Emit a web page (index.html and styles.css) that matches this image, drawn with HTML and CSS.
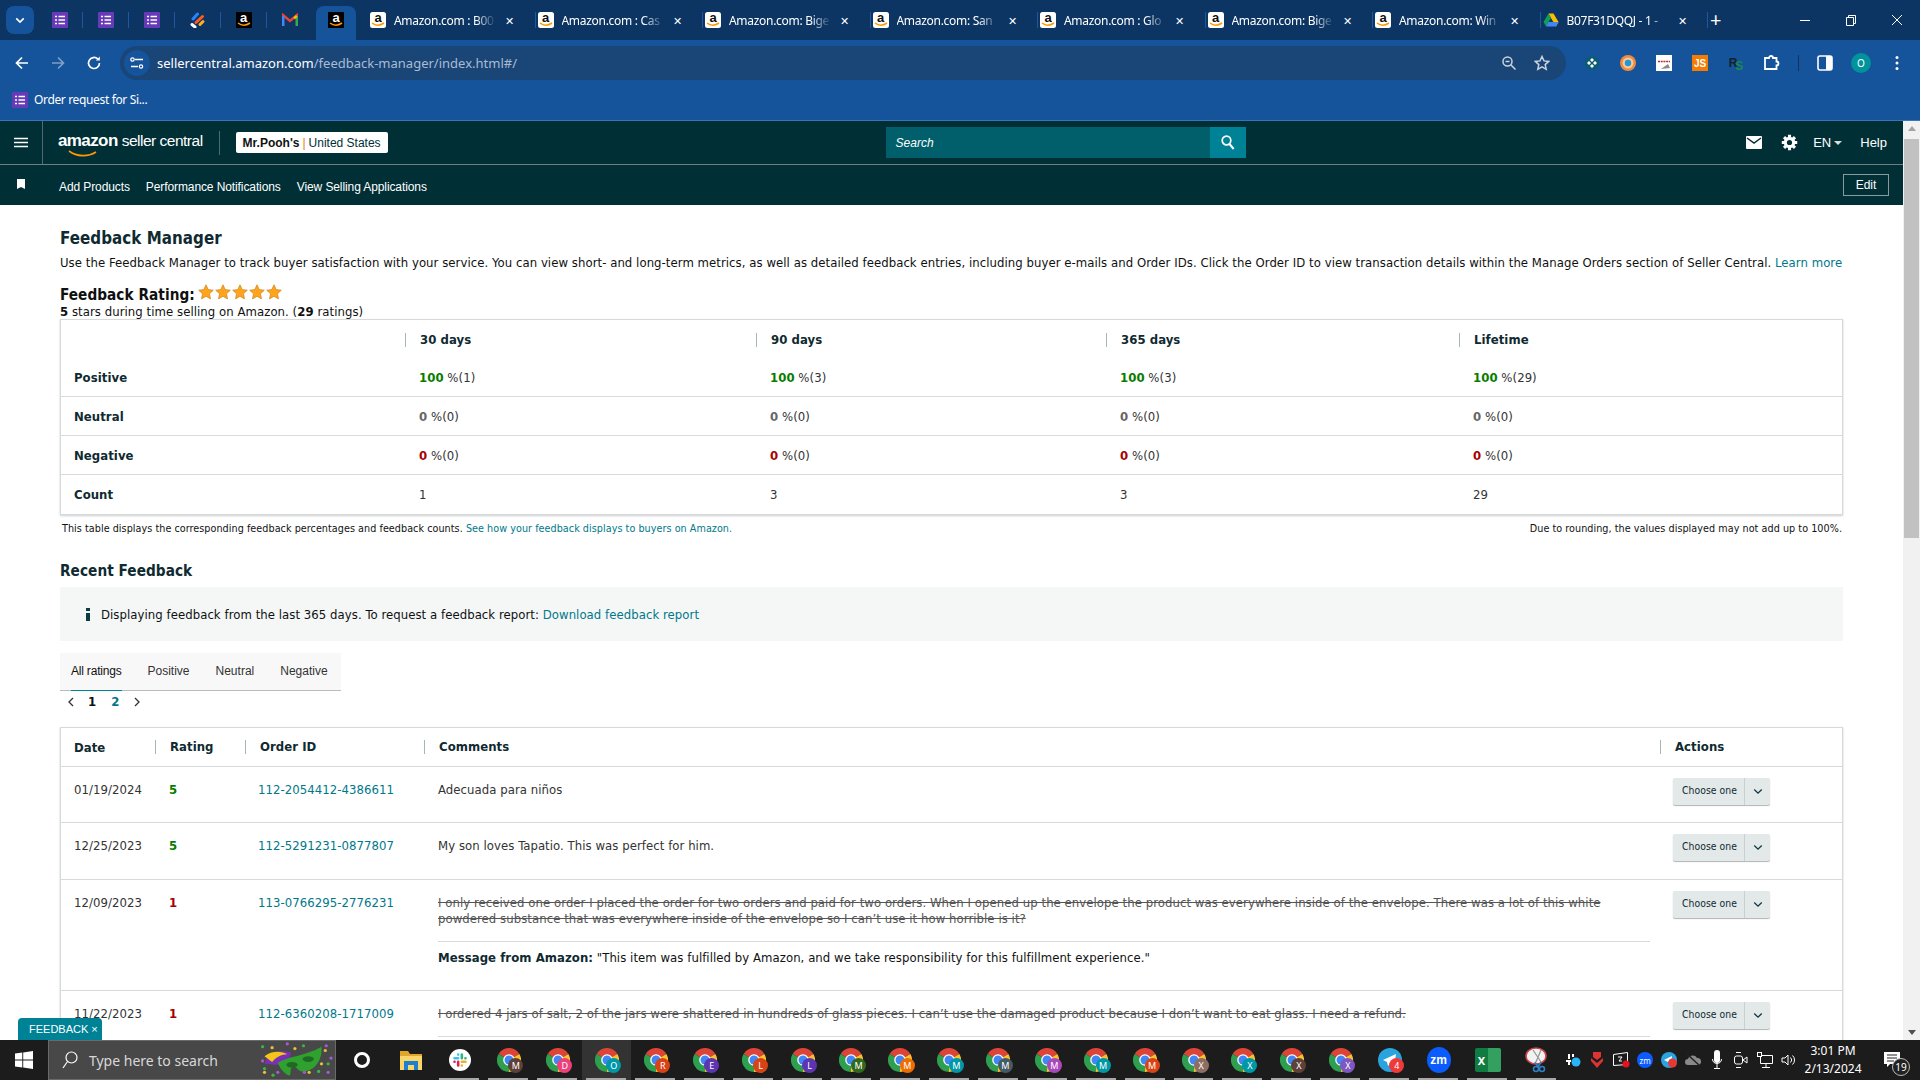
FILE: index.html
```html
<!DOCTYPE html>
<html lang="en">

<head>
    <meta charset="UTF-8">
    <meta name="viewport" content="width=device-width, initial-scale=1.0">
    <title>Feedback Manager</title>
    <link rel="stylesheet" href="styles.css">
</head>

<body>
    <svg class="defs" width="0" height="0">
        <symbol id="forms" viewBox="0 0 16 16">
            <rect width="16" height="16" rx="1" fill="#673ab7" />
            <path d="M3 4.500h2M6.500 4.500H13M3 8h2M6.500 8H13M3 11.500h2M6.500 11.500H13" stroke="#fff" stroke-width="1.600" />
        </symbol>
        <symbol id="smile" viewBox="0 0 14 5">
            <path d="M1 1c3.500 2.800 8 2.800 12 0" fill="none" stroke="#f90" stroke-width="1.600" />
        </symbol>
        <symbol id="chrome" viewBox="0 0 24 24">
            <path d="M12 12L1.600 6A12 12 0 0 1 22.400 6Z" fill="#db4437" />
            <path d="M12 12L22.400 6A12 12 0 0 1 12 24Z" fill="#fbc02d" />
            <path d="M12 12L12 24A12 12 0 0 1 1.600 6Z" fill="#2e9e4f" />
            <circle cx="12" cy="12" r="5.800" fill="#fff" />
            <circle cx="12" cy="12" r="4.500" fill="#4285f4" />
        </symbol>
        <symbol id="star" viewBox="0 0 16 16">
            <path d="M8 .8l2.200 4.800 5.100.6-3.800 3.500 1 5.200L8 12.300l-4.500 2.600 1-5.200L.7 6.200l5.100-.6z" fill="#ffa41c" stroke="#c7851a" stroke-width=".7" />
        </symbol>
        <symbol id="caret" viewBox="0 0 12 8">
            <path d="M1.500 1.500L6 6l4.500-4.500" fill="none" stroke="#0f3b45" stroke-width="1.600" />
        </symbol>
    </svg>

    <div class="tabstrip">
        <button class="tab-search"><svg width="10" height="7" viewBox="0 0 12 8"><path d="M1.500 1.500L6 6l4.500-4.500" fill="none" stroke="#fff" stroke-width="2" /></svg></button>
        <div class="pinned"><svg width="16" height="16"><use href="#forms" /></svg></div>
        <div class="pinned"><svg width="16" height="16"><use href="#forms" /></svg></div>
        <div class="pinned"><svg width="16" height="16"><use href="#forms" /></svg></div>
        <div class="pinned">
            <svg width="16" height="16" viewBox="0 0 16 16"><path d="M7.500 2L3 7" stroke="#2684ff" stroke-width="3" stroke-linecap="round" /><path d="M12.500 4.500L6 10.500" stroke="#ff5a1f" stroke-width="3" stroke-linecap="round" /><path d="M13 9.500l-3 3" stroke="#ffb020" stroke-width="3" stroke-linecap="round" /><path d="M2 12.500l3 2.500" stroke="#fff" stroke-width="3" stroke-linecap="round" /></svg>
        </div>
        <div class="pinned"><span class="fav dark">a<svg width="14" height="5"><use href="#smile" /></svg></span></div>
        <div class="pinned no-sep">
            <svg width="16" height="14" viewBox="0 0 16 14"><path d="M1 13V2l7 6 7-6v11" fill="none" stroke="#ea4335" stroke-width="2.400" /><path d="M1.200 13V3" stroke="#4285f4" stroke-width="2.400" /><path d="M14.800 13V3" stroke="#34a853" stroke-width="2.400" /><path d="M14.800 3L12 5.400" stroke="#fbbc04" stroke-width="2.400" /></svg>
        </div>
        <div class="tab-active"><span class="fav dark">a<svg width="14" height="5"><use href="#smile" /></svg></span></div>
        <div class="tab"><span class="fav">a<svg width="14" height="5"><use href="#smile" /></svg></span><span class="tab-title">Amazon.com : B00</span><span class="tab-close">✕</span></div>
        <div class="tab"><span class="fav">a<svg width="14" height="5"><use href="#smile" /></svg></span><span class="tab-title">Amazon.com : Cas</span><span class="tab-close">✕</span></div>
        <div class="tab"><span class="fav">a<svg width="14" height="5"><use href="#smile" /></svg></span><span class="tab-title">Amazon.com: Bige</span><span class="tab-close">✕</span></div>
        <div class="tab"><span class="fav">a<svg width="14" height="5"><use href="#smile" /></svg></span><span class="tab-title">Amazon.com: San</span><span class="tab-close">✕</span></div>
        <div class="tab"><span class="fav">a<svg width="14" height="5"><use href="#smile" /></svg></span><span class="tab-title">Amazon.com : Glo</span><span class="tab-close">✕</span></div>
        <div class="tab"><span class="fav">a<svg width="14" height="5"><use href="#smile" /></svg></span><span class="tab-title">Amazon.com: Bige</span><span class="tab-close">✕</span></div>
        <div class="tab"><span class="fav">a<svg width="14" height="5"><use href="#smile" /></svg></span><span class="tab-title">Amazon.com: Win</span><span class="tab-close">✕</span></div>
        <div class="tab">
            <svg width="16" height="16" viewBox="0 0 16 16"><path d="M5.500 1.500h5L15.500 10l-2.500 4.500-5-8.500z" fill="#fbbc04" /><path d="M5.500 1.500L.5 10 3 14.500 8 6z" fill="#0f9d58" /><path d="M5.400 10h10.100L13 14.500H3z" fill="#4285f4" /></svg>
            <span class="tab-title">B07F31DQQJ - 1 -</span><span class="tab-close">✕</span>
        </div>
        <span class="new-tab">+</span>
        <div class="win-controls">
            <span class="win-btn"><svg width="10" height="10"><path d="M0 5.500h10" stroke="#fff" /></svg></span>
            <span class="win-btn"><svg width="10" height="11"><path d="M.5 2.500h7v8h-7zM2.500 2.500V.5h7v8h-2" fill="none" stroke="#fff" /></svg></span>
            <span class="win-btn"><svg width="10" height="10"><path d="M0 0l10 10M10 0L0 10" stroke="#fff" /></svg></span>
        </div>
    </div>

    <div class="toolbar">
        <span class="tool-btn"><svg width="16" height="16" viewBox="0 0 16 16"><path d="M14 8H3M8 2.500L2.500 8 8 13.500" fill="none" stroke="#fff" stroke-width="1.700" /></svg></span>
        <span class="tool-btn"><svg width="16" height="16" viewBox="0 0 16 16"><path d="M2 8h11M8 2.500L13.500 8 8 13.500" fill="none" stroke="#7f9fc6" stroke-width="1.700" /></svg></span>
        <span class="tool-btn"><svg width="16" height="16" viewBox="0 0 16 16"><path d="M13.500 8A5.500 5.500 0 1 1 11.800 4" fill="none" stroke="#fff" stroke-width="1.700" /><path d="M13.800 1.500v4h-4z" fill="#fff" /></svg></span>
        <div class="omnibox">
            <span class="site-info"><svg width="14" height="12" viewBox="0 0 14 12"><path d="M5 2.500h8M1 9.500h7" stroke="#fff" stroke-width="1.300" /><circle cx="2.500" cy="2.500" r="1.700" fill="none" stroke="#fff" stroke-width="1.200" /><circle cx="11" cy="9.500" r="1.700" fill="none" stroke="#fff" stroke-width="1.200" /></svg></span>
            <span class="url"><b>sellercentral.amazon.com</b>/feedback-manager/index.html#/</span>
            <svg class="omni-zoom" width="16" height="16" viewBox="0 0 16 16"><circle cx="6.500" cy="6.500" r="4.500" fill="none" stroke="#c9d3df" stroke-width="1.500" /><path d="M10 10l4.500 4.500M4.500 6.500h4" stroke="#c9d3df" stroke-width="1.500" /></svg>
            <svg class="omni-star" width="16" height="16" viewBox="0 0 16 16"><path d="M8 1.500l2 4.400 4.700.5-3.500 3.200 1 4.700L8 11.900l-4.200 2.400 1-4.700L1.300 6.400 6 5.900z" fill="none" stroke="#c9d3df" stroke-width="1.500" /></svg>
        </div>
        <div class="ext-icons">
            <span class="ext"><svg width="16" height="16" viewBox="0 0 16 16"><circle cx="8" cy="8" r="7" fill="#0b5c73" /><path d="M8 3l2 2-2 2-2-2zM8 9l2 2-2 2-2-2zM3 8l2-2 2 2-2 2zM13 8l-2-2-2 2 2 2z" fill="#fff" /></svg></span>
            <span class="ext"><svg width="18" height="18" viewBox="0 0 18 18"><circle cx="9" cy="9" r="8" fill="#f08a3c" /><circle cx="9" cy="9" r="5.500" fill="#f6c79a" /><circle cx="9" cy="9" r="3.200" fill="#1b9ad6" /></svg></span>
            <span class="ext"><svg width="16" height="16" viewBox="0 0 16 16"><rect width="16" height="16" fill="#fff" /><path d="M2 6.500h12" stroke="#a33" stroke-width="1.500" stroke-dasharray="2 .7" /><path d="M5 14l7-5 2 4z" fill="#8a8a8a" /></svg></span>
            <span class="ext ext-js">JS</span>
            <span class="ext ext-rs">R<i>S</i></span>
            <span class="ext"><svg width="18" height="18" viewBox="0 0 18 18"><path d="M2 4h4a2 2 0 0 1 4 0h3.500v3.500a2 2 0 0 1 0 4V15H2z" fill="none" stroke="#fff" stroke-width="1.800" /></svg></span>
            <span class="ext-sep"></span>
            <span class="ext"><svg width="16" height="16" viewBox="0 0 16 16"><rect x="1" y="1" width="14" height="14" rx="2" fill="none" stroke="#fff" stroke-width="1.600" /><rect x="9" y="1" width="6" height="14" fill="#fff" /></svg></span>
            <span class="ext"><span class="avatar">O</span></span>
            <span class="ext"><svg width="4" height="16" viewBox="0 0 4 16"><circle cx="2" cy="2.500" r="1.500" fill="#fff" /><circle cx="2" cy="8" r="1.500" fill="#fff" /><circle cx="2" cy="13.500" r="1.500" fill="#fff" /></svg></span>
        </div>
    </div>

    <div class="bookmarks">
        <svg width="16" height="16"><use href="#forms" /></svg>
        <span>Order request for Si...</span>
    </div>

    <div class="viewport">
        <div class="page">
            <header class="topnav">
                <span class="burger"><svg width="14" height="11" viewBox="0 0 14 11"><path d="M0 1.500h14M0 5.500h14M0 9.500h14" stroke="#fff" stroke-width="1.700" /></svg></span>
                <div class="logo">
                    <span class="logo-amazon">amazon</span><span class="logo-seller">seller central</span>
                    <svg class="logo-smile" width="30" height="8" viewBox="0 0 30 8"><path d="M1 1c8 6 19 6 27 1" fill="none" stroke="#f90" stroke-width="1.600" /></svg>
                </div>
                <span class="logo-sep"></span>
                <div class="store"><b>Mr.Pooh's</b> <i>|</i> United States</div>
                <div class="search">
                    <span class="search-input">Search</span>
                    <span class="search-btn"><svg width="14" height="15" viewBox="0 0 14 15"><circle cx="5.500" cy="5.500" r="4.300" fill="none" stroke="#fff" stroke-width="1.700" /><path d="M8.500 9l4.200 5" stroke="#fff" stroke-width="2" /></svg></span>
                </div>
                <div class="topnav-right">
                    <svg width="16" height="13" viewBox="0 0 16 13"><rect width="16" height="13" rx="1" fill="#fff" /><path d="M1 2l7 5 7-5" fill="none" stroke="#002f36" stroke-width="1.500" /></svg>
                    <svg class="gear" width="19" height="19" viewBox="0 0 16 16"><path d="M8 1.500v13M1.500 8h13M3.400 3.400l9.200 9.200M12.600 3.400l-9.200 9.200" stroke="#fff" stroke-width="2.600" /><circle cx="8" cy="8" r="4.800" fill="#fff" /><circle cx="8" cy="8" r="2.200" fill="#002f36" /></svg>
                    <span class="lang">EN</span><span class="lang-caret"></span>
                    <span class="help">Help</span>
                </div>
            </header>
            <nav class="subnav">
                <svg class="bookmark" width="8" height="10" viewBox="0 0 8 10"><path d="M0 0h8v10L4 8l-4 2z" fill="#fff" /></svg>
                <a>Add Products</a>
                <a>Performance Notifications</a>
                <a>View Selling Applications</a>
                <span class="edit-btn">Edit</span>
            </nav>

            <main class="content">
                <h1>Feedback Manager</h1>
                <p class="intro">Use the Feedback Manager to track buyer satisfaction with your service. You can view short- and long-term metrics, as well as detailed feedback entries, including buyer e-mails and Order IDs. Click the Order ID to view transaction details within the Manage Orders section of Seller Central. <a class="link">Learn more</a></p>
                <div class="rating-title">
                    <h2>Feedback Rating:</h2>
                    <span class="stars">
                        <svg width="16" height="16"><use href="#star" /></svg>
                        <svg width="16" height="16"><use href="#star" /></svg>
                        <svg width="16" height="16"><use href="#star" /></svg>
                        <svg width="16" height="16"><use href="#star" /></svg>
                        <svg width="16" height="16"><use href="#star" /></svg>
                    </span>
                </div>
                <p class="rating-sub"><b>5</b> stars during time selling on Amazon. (<b>29</b> ratings)</p>

                <div class="panel">
                    <table class="summary">
                        <thead>
                            <tr>
                                <th></th>
                                <th><span class="th-label">30 days</span></th>
                                <th><span class="th-label">90 days</span></th>
                                <th><span class="th-label">365 days</span></th>
                                <th><span class="th-label">Lifetime</span></th>
                            </tr>
                        </thead>
                        <tbody>
                            <tr>
                                <th>Positive</th>
                                <td><b class="good">100</b> %(1)</td>
                                <td><b class="good">100</b> %(3)</td>
                                <td><b class="good">100</b> %(3)</td>
                                <td><b class="good">100</b> %(29)</td>
                            </tr>
                            <tr>
                                <th>Neutral</th>
                                <td><b class="neutral">0</b> %(0)</td>
                                <td><b class="neutral">0</b> %(0)</td>
                                <td><b class="neutral">0</b> %(0)</td>
                                <td><b class="neutral">0</b> %(0)</td>
                            </tr>
                            <tr>
                                <th>Negative</th>
                                <td><b class="bad">0</b> %(0)</td>
                                <td><b class="bad">0</b> %(0)</td>
                                <td><b class="bad">0</b> %(0)</td>
                                <td><b class="bad">0</b> %(0)</td>
                            </tr>
                            <tr>
                                <th>Count</th>
                                <td>1</td>
                                <td>3</td>
                                <td>3</td>
                                <td>29</td>
                            </tr>
                        </tbody>
                    </table>
                </div>
                <div class="footnote">
                    <span>This table displays the corresponding feedback percentages and feedback counts. <a class="link">See how your feedback displays to buyers on Amazon.</a></span>
                    <span>Due to rounding, the values displayed may not add up to 100%.</span>
                </div>

                <h2 class="recent-title">Recent Feedback</h2>
                <div class="banner">
                    <svg width="4" height="13" viewBox="0 0 4 13"><path d="M0 0h4v3H0zM0 5h4v8H0z" fill="#0f3b45" /></svg>
                    <span>Displaying feedback from the last 365 days. To request a feedback report: <a class="link">Download feedback report</a></span>
                </div>
                <div class="tabs">
                    <span class="tab-link active">All ratings</span>
                    <span class="tab-link">Positive</span>
                    <span class="tab-link">Neutral</span>
                    <span class="tab-link">Negative</span>
                </div>
                <div class="pager">
                    <svg width="6" height="10" viewBox="0 0 6 10"><path d="M5 1L1 5l4 4" fill="none" stroke="#333" stroke-width="1.300" /></svg>
                    <b>1</b>
                    <b class="link">2</b>
                    <svg width="6" height="10" viewBox="0 0 6 10"><path d="M1 1l4 4-4 4" fill="none" stroke="#333" stroke-width="1.300" /></svg>
                </div>

                <div class="panel">
                    <table class="recent">
                        <thead>
                            <tr>
                                <th class="col-date">Date</th>
                                <th class="col-rating"><span class="th-label">Rating</span></th>
                                <th class="col-order"><span class="th-label">Order ID</span></th>
                                <th class="col-comments"><span class="th-label">Comments</span></th>
                                <th class="col-actions"><span class="th-label">Actions</span></th>
                            </tr>
                        </thead>
                        <tbody>
                            <tr class="row-a">
                                <td>01/19/2024</td>
                                <td class="good-cell"><b class="good">5</b></td>
                                <td><a class="link">112-2054412-4386611</a></td>
                                <td class="comment-cell">Adecuada para niños</td>
                                <td class="action-cell"><div class="choose"><span>Choose one</span><i><svg width="10" height="7"><use href="#caret" /></svg></i></div></td>
                            </tr>
                            <tr class="row-b">
                                <td>12/25/2023</td>
                                <td class="good-cell"><b class="good">5</b></td>
                                <td><a class="link">112-5291231-0877807</a></td>
                                <td class="comment-cell">My son loves Tapatio. This was perfect for him.</td>
                                <td class="action-cell"><div class="choose"><span>Choose one</span><i><svg width="10" height="7"><use href="#caret" /></svg></i></div></td>
                            </tr>
                            <tr class="row-c">
                                <td>12/09/2023</td>
                                <td class="good-cell"><b class="bad">1</b></td>
                                <td><a class="link">113-0766295-2776231</a></td>
                                <td class="comment-cell">
                                    <p class="removed">I only received one order I placed the order for two orders and paid for two orders. When I opened up the envelope the product was everywhere inside of the envelope. There was a lot of this white<br>powdered substance that was everywhere inside of the envelope so I can’t use it how horrible is it?</p>
                                    <p class="amz-msg"><b>Message from Amazon:</b> "This item was fulfilled by Amazon, and we take responsibility for this fulfillment experience."</p>
                                </td>
                                <td class="action-cell"><div class="choose"><span>Choose one</span><i><svg width="10" height="7"><use href="#caret" /></svg></i></div></td>
                            </tr>
                            <tr class="row-c">
                                <td>11/22/2023</td>
                                <td class="good-cell"><b class="bad">1</b></td>
                                <td><a class="link">112-6360208-1717009</a></td>
                                <td class="comment-cell"><p class="removed">I ordered 4 jars of salt, 2 of the jars were shattered in hundreds of glass pieces. I can’t use the damaged product because I don’t want to eat glass. I need a refund.</p></td>
                                <td class="action-cell"><div class="choose"><span>Choose one</span><i><svg width="10" height="7"><use href="#caret" /></svg></i></div></td>
                            </tr>
                        </tbody>
                    </table>
                </div>
            </main>
            <div class="feedback-tab">FEEDBACK <span>×</span></div>
        </div>

        <div class="scrollbar">
            <span class="arrow-up"></span>
            <div class="thumb"></div>
            <span class="arrow-down"></span>
        </div>
    </div>

    <footer class="taskbar">
        <span class="start"><svg width="18" height="18" viewBox="0 0 18 18"><path d="M0 2.600l7.300-1v7H0zM8.200 1.400L18 0v8.600H8.200zM0 9.400h7.300v7l-7.300-1zM8.200 9.400H18V18l-9.800-1.400z" fill="#fff" /></svg></span>
        <div class="task-search">
            <svg width="16" height="18" viewBox="0 0 16 18"><circle cx="9.500" cy="6.500" r="5.500" fill="none" stroke="#fff" stroke-width="1.200" /><path d="M5.500 10.500L1 17" stroke="#fff" stroke-width="1.200" /></svg>
            <span>Type here to search</span>
            <svg class="mask" width="84" height="38" viewBox="0 0 84 40">
                <path d="M12 24c2-10 14-16 28-12l-4 14z" fill="#7b2fb5" />
                <path d="M12 16c7-6 18-6 24-2-8 0-12 4-16 8z" fill="#f5c518" />
                <path d="M26 23C36 16 55 16 72 6c1 14-7 26-20 26-5 0-5-5-10-5-4 0-1 11-5 9-5-2-9-8-11-13z" fill="#2fa12f" />
                <ellipse cx="41" cy="25" rx="6" ry="3" fill="#1f6a23" />
                <ellipse cx="58" cy="19" rx="6" ry="3" fill="#1f6a23" />
                <g fill="#3bb54a"><circle cx="10" cy="6" r="1.700" /><circle cx="53" cy="5" r="1.700" /><circle cx="79" cy="24" r="1.700" /><circle cx="12" cy="29" r="1.700" /><circle cx="21" cy="36" r="1.700" /><circle cx="69" cy="32" r="1.700" /></g>
                <g fill="#e6c13c"><circle cx="20" cy="7" r="1.700" /><circle cx="44" cy="8" r="1.700" /><circle cx="76" cy="10" r="1.700" /><circle cx="72" cy="24" r="1.700" /><circle cx="12" cy="33" r="1.700" /><circle cx="59" cy="33" r="1.700" /></g>
                <g fill="#a75ad8"><circle cx="36" cy="3" r="1.700" /><circle cx="77" cy="5" r="1.700" /><circle cx="82" cy="18" r="1.700" /><circle cx="10" cy="21" r="1.700" /><circle cx="26" cy="33" r="1.700" /><circle cx="54" cy="33" r="1.700" /><circle cx="79" cy="33" r="1.700" /></g>
            </svg>
        </div>
        <span class="task-item no-bar"><span class="cortana"></span></span>
        <span class="task-item no-bar"><svg width="22" height="19" viewBox="0 0 22 19"><path d="M0 0h8l2 3h12v16H0z" fill="#e0a52c" /><rect x="0" y="5" width="22" height="14" fill="#fcd56a" /><path d="M4 19v-9h14v9h-4v-5H8v5z" fill="#1c7fd0" /></svg></span>
        <span class="task-item"><svg width="22" height="22" viewBox="0 0 24 24"><circle cx="12" cy="12" r="12" fill="#fff" /><path d="M6 10h4M10 6v.1" stroke="#36c5f0" stroke-width="2.800" stroke-linecap="round" /><path d="M14 6v4M18 10h-.1" stroke="#2eb67d" stroke-width="2.800" stroke-linecap="round" /><path d="M10 14v4M6 14h.1" stroke="#e01e5a" stroke-width="2.800" stroke-linecap="round" /><path d="M14 14h4M14 18v-.1" stroke="#ecb22e" stroke-width="2.800" stroke-linecap="round" /></svg></span>
        <span class="task-item"><svg width="24" height="24"><use href="#chrome" /></svg><em class="badge b-brown">M</em></span>
        <span class="task-item"><svg width="24" height="24"><use href="#chrome" /></svg><em class="badge b-pink">D</em></span>
        <span class="task-item current"><svg width="24" height="24"><use href="#chrome" /></svg><em class="badge b-teal">O</em></span>
        <span class="task-item"><svg width="24" height="24"><use href="#chrome" /></svg><em class="badge b-red">R</em></span>
        <span class="task-item"><svg width="24" height="24"><use href="#chrome" /></svg><em class="badge b-indigo">E</em></span>
        <span class="task-item"><svg width="24" height="24"><use href="#chrome" /></svg><em class="badge b-red">L</em></span>
        <span class="task-item"><svg width="24" height="24"><use href="#chrome" /></svg><em class="badge b-indigo">L</em></span>
        <span class="task-item"><svg width="24" height="24"><use href="#chrome" /></svg><em class="badge b-green">M</em></span>
        <span class="task-item"><svg width="24" height="24"><use href="#chrome" /></svg><em class="badge b-orange">M</em></span>
        <span class="task-item"><svg width="24" height="24"><use href="#chrome" /></svg><em class="badge b-teal">M</em></span>
        <span class="task-item"><svg width="24" height="24"><use href="#chrome" /></svg><em class="badge b-slate">M</em></span>
        <span class="task-item"><svg width="24" height="24"><use href="#chrome" /></svg><em class="badge b-purple">M</em></span>
        <span class="task-item"><svg width="24" height="24"><use href="#chrome" /></svg><em class="badge b-teal">M</em></span>
        <span class="task-item"><svg width="24" height="24"><use href="#chrome" /></svg><em class="badge b-red">M</em></span>
        <span class="task-item"><svg width="24" height="24"><use href="#chrome" /></svg><em class="badge b-taupe">X</em></span>
        <span class="task-item"><svg width="24" height="24"><use href="#chrome" /></svg><em class="badge b-teal">X</em></span>
        <span class="task-item"><svg width="24" height="24"><use href="#chrome" /></svg><em class="badge b-brown">X</em></span>
        <span class="task-item"><svg width="24" height="24"><use href="#chrome" /></svg><em class="badge b-violet">X</em></span>
        <span class="task-item"><svg width="24" height="24" viewBox="0 0 24 24"><circle cx="12" cy="12" r="12" fill="#2aa3de" /><path d="M5 12l13-6-2 13-4-3-2 2-1-4z" fill="#fff" /></svg><em class="badge b-alert">4</em></span>
        <span class="task-item"><span class="zm">zm</span></span>
        <span class="task-item"><span class="xl">X</span></span>
        <span class="task-item"><svg width="24" height="26" viewBox="0 0 24 26"><ellipse cx="11" cy="9" rx="10" ry="8" fill="#f2f2f2" stroke="#c44" stroke-width="1.500" /><path d="M8 3l8 12M16 3l-5 12" stroke="#999" stroke-width="1.300" /><path d="M10 15l3 5M16 15l-3 5" stroke="#2f80c9" stroke-width="1.500" /><circle cx="11" cy="22" r="2.500" fill="none" stroke="#2f80c9" stroke-width="1.500" /><circle cx="17" cy="22" r="2.500" fill="none" stroke="#2f80c9" stroke-width="1.500" /></svg></span>
        <div class="tray">
            <span><svg width="16" height="14" viewBox="0 0 16 14"><path d="M4 1v5M1 8h5M8 1v3" stroke="#fff" stroke-width="2" /><path d="M4 12V9" stroke="#fff" stroke-width="2" /><circle cx="11" cy="9" r="4.500" fill="#29b6f6" /></svg></span>
            <span><svg width="12" height="16" viewBox="0 0 12 16"><path d="M2 0h8v5L6 8 2 5z" fill="#d33" /><path d="M0 6l6 5 6-5v3l-6 7-6-7z" fill="#d33" /></svg></span>
            <span><svg width="17" height="16" viewBox="0 0 17 16"><path d="M.5 2.500l14-2v12l-14 1z" fill="none" stroke="#fff" /><path d="M5 5h4l-3 4h3" fill="none" stroke="#fff" /><circle cx="13" cy="12" r="3.500" fill="#e81123" /></svg></span>
            <span><span class="tray-zm">zm</span></span>
            <span><svg width="16" height="16" viewBox="0 0 16 16"><circle cx="8" cy="8" r="8" fill="#2aa3de" /><path d="M3 8l8-4-1 8-3-2z" fill="#fff" /><circle cx="11.500" cy="11" r="4.500" fill="#e53935" /></svg></span>
            <span><svg width="16" height="14" viewBox="0 0 16 14"><path d="M3 12a3 3 0 0 1 0-6c1-4 7-5 9-1a3.500 3.500 0 0 1 1 7z" fill="#8a8a8a" /><path d="M2 1l13 12" stroke="#222" stroke-width="1.500" /></svg></span>
            <span><svg width="10" height="20" viewBox="0 0 10 20"><rect x="2" y="0" width="6" height="13" rx="3" fill="#fff" /><path d="M.5 9c0 6 9 6 9 0M5 14v4M2 18.500h6" fill="none" stroke="#fff" /></svg></span>
            <span><svg width="14" height="18" viewBox="0 0 14 18"><rect x=".5" y="5" width="8" height="8" rx="2" fill="none" stroke="#fff" /><path d="M9 9l4-3v6z" fill="none" stroke="#fff" /><path d="M2 1.500h5M2 16.500h5" stroke="#fff" /></svg></span>
            <span><svg width="16" height="16" viewBox="0 0 16 16"><path d="M3.500 3.500h12v8h-12zM9 12v3M5 15.500h8" fill="none" stroke="#fff" /><rect x=".5" y=".5" width="4" height="4" fill="#222" stroke="#fff" /></svg></span>
            <span><svg width="16" height="14" viewBox="0 0 16 14"><path d="M1 5h3l3-3v10L4 9H1z" fill="none" stroke="#fff" /><path d="M9.500 4.500a3.500 3.500 0 0 1 0 5M11.500 2.500a6 6 0 0 1 0 9" fill="none" stroke="#fff" /></svg></span>
        </div>
        <div class="clock"><span>3:01 PM</span><span>2/13/2024</span></div>
        <div class="notif">
            <svg width="16" height="15" viewBox="0 0 16 15"><path d="M0 0h16v12H6l-3 3v-3H0z" fill="#fff" /><path d="M3 3h10M3 6h10M3 9h7" stroke="#222" /></svg>
            <span class="notif-count">19</span>
        </div>
    </footer>
</body>

</html>
```

FILE: styles.css
```css
* {
    box-sizing: border-box;
}

body {
    display: flex;
    flex-direction: column;
    width: 1920px;
    height: 1080px;
    margin: 0;
    overflow: hidden;
    background: white;
    font-family: "DejaVu Sans Condensed", "DejaVu Sans", sans-serif;
    color: #0f1111;
}

svg {
    flex-shrink: 0;
}

.defs {
    position: absolute;
}

.fav {
    position: relative;
    display: flex;
    flex-shrink: 0;
    justify-content: center;
    width: 16px;
    height: 16px;
    background: #fff;
    border-radius: 2.5px;
    color: #111;
    font-family: "Liberation Sans", sans-serif;
    font-size: 13px;
    font-weight: bold;
    line-height: 12px;
}

.fav.dark {
    background: #000;
    border-radius: 0;
    color: #fff;
}

.fav svg {
    position: absolute;
    left: 1px;
    bottom: 1px;
}

/* browser chrome */
.tabstrip {
    display: flex;
    align-items: center;
    height: 40px;
    background: #0d3563;
    color: #fff;
    font-family: "Noto Sans", sans-serif;
    font-size: 12px;
}

.tab-search {
    display: flex;
    align-items: center;
    justify-content: center;
    width: 28px;
    height: 28px;
    margin: 0 3px 0 6px;
    background: #15539b;
    border: none;
    border-radius: 8px;
}

.pinned {
    display: flex;
    align-items: center;
    justify-content: center;
    width: 46px;
    height: 16px;
    border-right: 1px solid #1b5aa0;
}

.pinned.no-sep {
    border-right: none;
}

.tab-active {
    display: flex;
    align-items: center;
    justify-content: center;
    align-self: flex-end;
    width: 40px;
    height: 34px;
    margin-left: 3px;
    margin-right: 12px;
    padding-bottom: 6px;
    background: #15539b;
    border-radius: 8px 8px 0 0;
}

.tab {
    display: flex;
    align-items: center;
    width: 167.5px;
    height: 16px;
    padding-left: 2px;
    border-right: 1px solid #1b5aa0;
}

.tab-title {
    width: 102px;
    margin-left: 8px;
    letter-spacing: -.3px;
    white-space: nowrap;
    -webkit-mask-image: linear-gradient(to right, #000 80%, transparent 100%);
    mask-image: linear-gradient(to right, #000 80%, transparent 100%);
}

.tab-close {
    margin-left: 9px;
    font-size: 11px;
}

.new-tab {
    margin-left: 2px;
    font-size: 20px;
    line-height: 20px;
}

.win-controls {
    display: flex;
    margin-left: auto;
}

.win-btn {
    display: flex;
    align-items: center;
    justify-content: center;
    width: 46px;
    height: 30px;
}

.toolbar {
    display: flex;
    align-items: flex-end;
    height: 40px;
    padding-left: 4px;
    background: #15539b;
    color: #fff;
    font-family: "Noto Sans", sans-serif;
}

.tool-btn {
    display: flex;
    align-items: center;
    justify-content: center;
    width: 36px;
    height: 34px;
}

.omnibox {
    display: flex;
    align-items: center;
    width: 1446px;
    height: 34px;
    margin-left: 8px;
    padding: 0 4px;
    background: #1a4577;
    border-radius: 17px;
}

.site-info {
    display: flex;
    align-items: center;
    justify-content: center;
    width: 26px;
    height: 26px;
    background: #15539b;
    border-radius: 50%;
}

.url {
    margin-left: 7px;
    font-size: 13px;
    color: #a9bcd2;
}

.url b {
    font-weight: normal;
    color: #fff;
}

.omni-zoom {
    margin-left: auto;
}

.omni-star {
    margin: 0 12px 0 17px;
}

.ext-icons {
    display: flex;
    align-items: center;
    height: 34px;
    margin-left: 8px;
}

.ext {
    display: flex;
    align-items: center;
    justify-content: center;
    width: 36px;
    height: 34px;
}

.ext-js {
    width: 16px;
    height: 16px;
    margin: 0 10px;
    background: #f57c00;
    font-family: "Liberation Sans", sans-serif;
    font-size: 10px;
    font-weight: bold;
}

.ext-rs {
    font-family: "Liberation Sans", sans-serif;
    font-size: 12px;
    font-weight: bold;
    color: #14202e;
}

.ext-rs i {
    margin: 5px 0 0 -2px;
    font-style: normal;
    color: #1b8a4b;
}

.ext-sep {
    width: 1px;
    height: 16px;
    margin: 0 8px;
    background: #0d3563;
}

.avatar {
    display: flex;
    align-items: center;
    justify-content: center;
    width: 20px;
    height: 20px;
    background: #00939c;
    border-radius: 50%;
    font-size: 10px;
}

.bookmarks {
    display: flex;
    align-items: center;
    gap: 6px;
    height: 41px;
    padding: 0 0 1px 12px;
    background: #15539b;
    border-bottom: 1px solid #3a75b8;
    color: #fff;
    font-family: "Noto Sans", sans-serif;
    font-size: 12px;
    letter-spacing: -.35px;
}

/* page area */
.viewport {
    display: flex;
    flex: 1;
    min-height: 0;
}

.page {
    position: relative;
    flex: 1;
    min-width: 0;
    overflow: hidden;
}

.scrollbar {
    display: flex;
    flex-direction: column;
    align-items: center;
    width: 17px;
    padding-top: 5px;
    background: #f1f1f1;
}

.arrow-up {
    border: 4px solid transparent;
    border-top: none;
    border-bottom: 5px solid #a3a3a3;
}

.thumb {
    width: 15px;
    height: 399px;
    margin-top: 8px;
    background: #c1c1c1;
}

.arrow-down {
    margin-top: auto;
    margin-bottom: 5px;
    border: 4px solid transparent;
    border-bottom: none;
    border-top: 5px solid #505050;
}

.topnav {
    display: flex;
    align-items: center;
    height: 44px;
    background: #002f36;
    border-bottom: 1px solid #6f7f81;
    color: #fff;
    font-family: "Liberation Sans", sans-serif;
}

.burger {
    display: flex;
    align-items: center;
    justify-content: center;
    width: 43px;
    height: 43px;
    border-right: 1px solid #4c6a6f;
}

.logo {
    position: relative;
    display: flex;
    align-items: baseline;
    margin-left: 15px;
    padding-bottom: 4px;
    white-space: nowrap;
}

.logo-amazon {
    font-size: 17px;
    font-weight: bold;
    letter-spacing: -.6px;
}

.logo-seller {
    margin-left: 4px;
    font-size: 15.5px;
    letter-spacing: -.5px;
}

.logo-smile {
    position: absolute;
    left: 10px;
    bottom: -3px;
}

.logo-sep {
    width: 1px;
    height: 24px;
    margin: 0 16px;
    background: #4c6a6f;
}

.store {
    display: flex;
    align-items: center;
    gap: 3px;
    height: 21px;
    padding: 0 7px;
    background: #fff;
    border-radius: 2px;
    color: #002f36;
    font-size: 12px;
    white-space: nowrap;
}

.store b {
    font-weight: bold;
    color: #111;
}

.store i {
    font-style: normal;
    color: #e47911;
}

.search {
    display: flex;
    width: 360px;
    height: 31px;
    margin-left: 498px;
}

.search-input {
    flex: 1;
    padding-left: 10px;
    background: #005f6b;
    font-size: 12px;
    font-style: italic;
    line-height: 32px;
}

.search-btn {
    display: flex;
    align-items: center;
    justify-content: center;
    width: 36px;
    background: #008296;
}

.topnav-right {
    display: flex;
    align-items: center;
    margin-left: auto;
    padding-right: 16px;
    font-size: 13px;
}

.gear {
    margin-left: 18px;
}

.lang {
    margin-left: 14px;
}

.lang-caret {
    margin-left: 3px;
    border: 4px solid transparent;
    border-bottom: none;
    border-top: 4px solid #d6dede;
}

.help {
    margin-left: 18px;
}

.subnav {
    display: flex;
    align-items: center;
    height: 40px;
    padding: 4px 14px 0 0;
    background: #002f36;
    color: #fff;
    font-family: "Liberation Sans", sans-serif;
    font-size: 12px;
}

.bookmark {
    margin: -6px 34px 0 17px;
}

.subnav a {
    margin-right: 16px;
    letter-spacing: -.1px;
}

.edit-btn {
    display: flex;
    align-items: center;
    justify-content: center;
    width: 46px;
    height: 22px;
    margin: -4px 0 0 auto;
    border: 1px solid #8a9a9c;
}

.feedback-tab {
    position: absolute;
    left: 18px;
    bottom: 0;
    width: 84px;
    height: 22px;
    padding-left: 11px;
    background: #008296;
    border-radius: 4px 4px 0 0;
    color: #fff;
    font-family: "Liberation Sans", sans-serif;
    font-size: 11px;
    line-height: 22px;
}

/* page content */
.content {
    padding: 0 60px;
    font-size: 13px;
    letter-spacing: .055px;
}

h1 {
    margin: 22px 0 0;
    font-size: 16.8px;
    font-weight: bold;
    line-height: 22px;
    color: #0f2a30;
}

.intro {
    margin: 6px 0 0;
    line-height: 16px;
    white-space: nowrap;
}

.link {
    color: #00788a;
    font-weight: normal;
}

.rating-title {
    display: flex;
    align-items: flex-start;
    gap: 3px;
    height: 20px;
    margin-top: 13px;
}

.rating-title h2 {
    margin: 1px 0 0;
    font-size: 15.2px;
    line-height: 20px;
}

.stars {
    display: flex;
    gap: 1px;
}

.rating-sub {
    margin: 1px 0 0;
    line-height: 14px;
}

.panel {
    border: 1px solid #d5dbdb;
    box-shadow: 0 1px 2px rgba(0, 0, 0, .2);
}

table {
    width: 100%;
    table-layout: fixed;
    border-collapse: separate;
    border-spacing: 0;
}

th {
    text-align: left;
    font-weight: bold;
    color: #0f2a30;
}

.th-label {
    display: block;
    padding-left: 14px;
    border-left: 1px solid #a6b5b7;
    line-height: 14px;
}

.summary th,
.summary td {
    height: 39px;
    padding-top: 1px;
    border-bottom: 1px solid #d5dbdb;
}

.summary tr:last-child th,
.summary tr:last-child td {
    border-bottom: none;
}

.summary tbody tr:first-child th,
.summary tbody tr:first-child td {
    height: 38px;
}

.summary th:first-child {
    width: 343px;
}

.summary thead th:nth-child(2) {
    width: 351px;
}

.summary thead th:nth-child(3) {
    width: 350px;
}

.summary thead th:nth-child(4) {
    width: 353px;
}

.summary tbody th {
    padding-left: 13px;
}

.summary td {
    padding-left: 15px;
    color: #333;
}

.good {
    color: #067d00;
}

.neutral {
    color: #666;
}

.bad {
    color: #a80000;
}

.footnote {
    display: flex;
    justify-content: space-between;
    margin-top: 7px;
    padding: 0 1px 0 2px;
    font-size: 10.7px;
    line-height: 14px;
}

.recent-title {
    margin: 25px 0 0;
    font-size: 15.2px;
    line-height: 20px;
    color: #0f2a30;
}

.banner {
    display: flex;
    align-items: center;
    gap: 11px;
    height: 54px;
    margin-top: 6px;
    padding-left: 26px;
    background: #f5f7f7;
}

.tabs {
    display: flex;
    width: 281px;
    height: 38px;
    margin-top: 12px;
    padding-left: 11px;
    gap: 26px;
    background: #f8f8f8;
    border-bottom: 1px solid #b8bcbc;
    font-family: "Liberation Sans", sans-serif;
    font-size: 12px;
    letter-spacing: 0;
    line-height: 36px;
    color: #333;
}

.tab-link.active {
    height: 37px;
    color: #111;
    letter-spacing: -.2px;
    box-shadow: 0 1px 0 #008296;
}

.pager {
    display: flex;
    align-items: center;
    gap: 15px;
    height: 22px;
    padding-left: 8px;
    font-size: 13px;
}

.pager b {
    font-weight: bold;
    margin-top: -2px;
}

.pager svg:first-child {
    margin-right: -1px;
}

.content .panel:last-of-type {
    margin-top: 14px;
}

.recent th {
    height: 39px;
    border-bottom: 1px solid #d5dbdb;
}

.recent .col-date {
    width: 93px;
    padding-left: 13px;
}

.recent .col-rating {
    width: 90px;
}

.recent .col-order {
    width: 179px;
}

.recent .col-comments {
    width: 1236px;
}

.recent td {
    padding: 15px 0 0 14px;
    vertical-align: top;
    line-height: 16px;
    border-bottom: 1px solid #d5dbdb;
    color: #333;
}

.recent td:first-child {
    padding-left: 13px;
}

.recent td.good-cell {
    padding-left: 15px;
}

.recent td.comment-cell {
    padding-left: 15px;
}

.recent .action-cell {
    padding: 11px 0 0 14px;
}

.row-a td {
    height: 56px;
}

.row-b td {
    height: 57px;
}

.row-c td {
    height: 111px;
}

.removed {
    margin: 0;
    padding-bottom: 14px;
    text-decoration: line-through;
    color: #555;
    border-bottom: 1px solid #d5dbdb;
    width: 1212px;
}

.amz-msg {
    margin: 8px 0 0;
    color: #111;
}

.amz-msg b {
    color: #0f2a30;
}

.choose {
    display: flex;
    width: 97px;
    height: 27px;
    background: #e3e9e9;
    border-radius: 2px;
    box-shadow: 0 1px 1px rgba(0, 0, 0, .3);
    font-size: 10.3px;
    line-height: 25px;
    color: #0f2a30;
}

.choose span {
    width: 72px;
    padding-left: 9px;
    white-space: nowrap;
    border-right: 1px solid #c8d0d0;
}

.choose i {
    display: flex;
    flex: 1;
    align-items: center;
    justify-content: center;
}

/* windows taskbar */
.taskbar {
    display: flex;
    align-items: center;
    height: 40px;
    background: #1c1c1c;
    color: #fff;
    font-family: "Noto Sans", sans-serif;
}

.start {
    display: flex;
    justify-content: center;
    width: 48px;
}

.task-search {
    display: flex;
    align-items: center;
    width: 288px;
    height: 40px;
    margin-right: 2px;
    padding-left: 13px;
    background: #484848;
    border: 1px solid #6a6a6a;
    font-size: 14px;
    color: #d8d8d8;
}

.task-search span {
    margin-left: 11px;
}

.mask {
    margin-left: auto;
}

.task-item {
    position: relative;
    display: flex;
    align-items: center;
    justify-content: center;
    width: 49px;
    height: 40px;
}

.task-item::after {
    content: "";
    position: absolute;
    left: 4px;
    right: 5px;
    bottom: 0;
    height: 2px;
    background: #a8a8a8;
}

.task-item.no-bar::after {
    display: none;
}

.task-item.current {
    background: #333;
}

.cortana {
    width: 16px;
    height: 16px;
    border: 3px solid #fff;
    border-radius: 50%;
}

.badge {
    position: absolute;
    left: 24px;
    top: 18px;
    display: flex;
    align-items: center;
    justify-content: center;
    width: 15px;
    height: 15px;
    border-radius: 50%;
    font-size: 9px;
    font-style: normal;
}

.b-brown { background: #5d4037; }
.b-pink { background: #ec407a; }
.b-teal { background: #0097a7; }
.b-red { background: #d84315; }
.b-indigo { background: #5e35b1; }
.b-green { background: #33691e; }
.b-orange { background: #ef6c00; }
.b-slate { background: #455a64; }
.b-purple { background: #ab47bc; }
.b-taupe { background: #8d6e63; }
.b-violet { background: #7e57c2; }
.b-alert { background: #f03a3a; }

.zm {
    display: flex;
    align-items: center;
    justify-content: center;
    width: 24px;
    height: 26px;
    background: #0b5cff;
    border-radius: 50%;
    font-family: "Liberation Sans", sans-serif;
    font-size: 12px;
    font-weight: bold;
}

.xl {
    display: flex;
    align-items: center;
    width: 26px;
    height: 24px;
    padding-left: 3px;
    background: linear-gradient(to right, #107c41 50%, #33a05f 50%);
    border-radius: 2px;
    font-size: 11px;
    font-weight: bold;
}

.tray {
    display: flex;
}

.tray > span {
    display: flex;
    align-items: center;
    justify-content: center;
    width: 24px;
    height: 40px;
}

.tray-zm {
    display: flex;
    align-items: center;
    justify-content: center;
    width: 16px;
    height: 16px;
    background: #0b5cff;
    border-radius: 50%;
    font-size: 8px;
}

.clock {
    display: flex;
    flex-direction: column;
    align-items: center;
    width: 62px;
    margin-left: 1px;
    font-size: 12px;
    line-height: 18px;
    white-space: nowrap;
}

.notif {
    position: relative;
    display: flex;
    justify-content: center;
    width: 56px;
    height: 40px;
    padding-top: 12px;
}

.notif-count {
    position: absolute;
    left: 28px;
    top: 18px;
    width: 18px;
    height: 18px;
    background: #222;
    border: 1px solid #bbb;
    border-radius: 50%;
    font-size: 10px;
    line-height: 16px;
    text-align: center;
}
```
